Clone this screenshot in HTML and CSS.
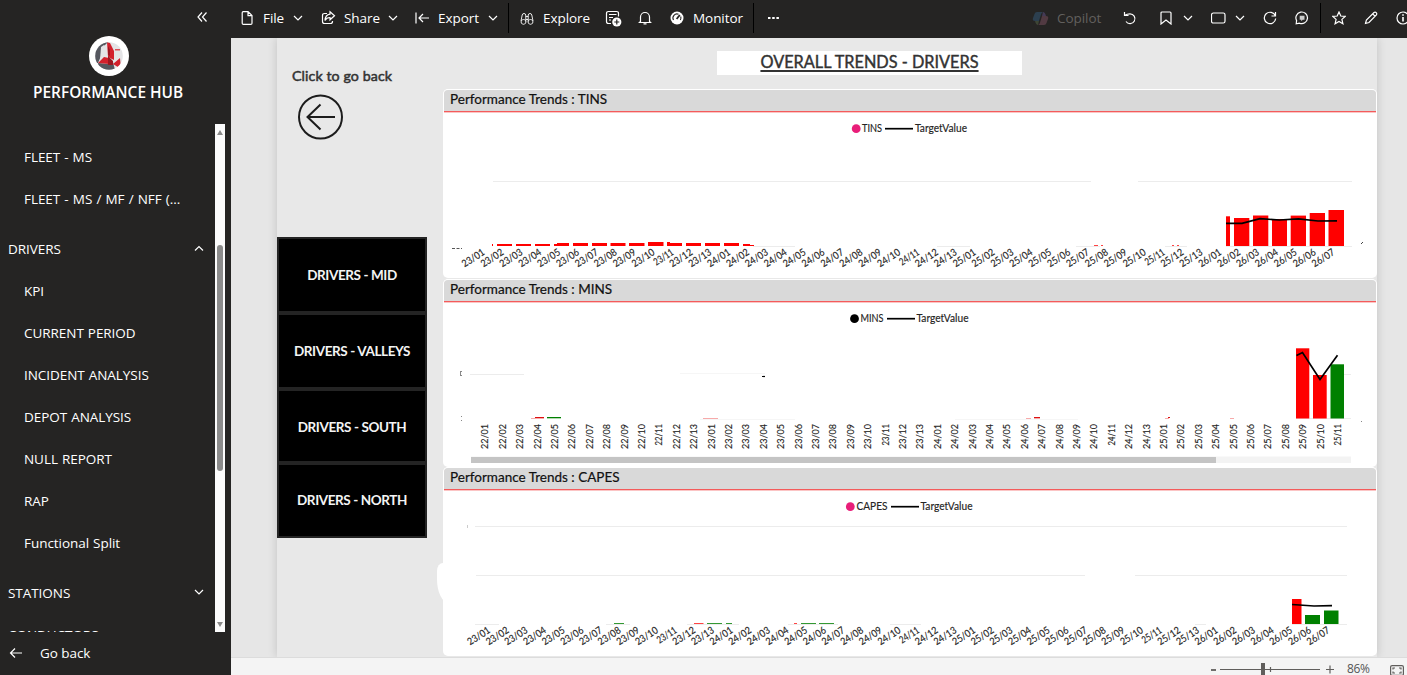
FILE: index.html
```html
<!DOCTYPE html>
<html lang="en">
<head>
<meta charset="utf-8">
<title>Performance Hub</title>
<link rel="stylesheet" href="styles.css">
</head>
<body>
<div class="app">
  <aside class="sidebar">
    <div class="collapse"><svg width="12" height="12" viewBox="0 0 12 12"><path d="M6 1.500 2 6 6 10.500M10.500 1.500 6.500 6l4 4.500"/></svg></div>
    <svg class="logo" width="40" height="40" viewBox="0 0 40 40">
      <circle cx="20" cy="20" r="20" fill="#fff"/>
      <clipPath id="disc"><circle cx="20" cy="20" r="13.800"/></clipPath>
      <g clip-path="url(#disc)">
        <path class="pale" d="M6 6h28v28H6z"/>
        <path class="slate" d="M6 6h13l-5 5-2 9-3 7H6zM9 27l11 1 4-2 2 8H10z"/>
        <path class="pale" d="m12 11 3-2 3 3v9l-7 3z"/>
        <path class="red" d="m9 27 6-6 5 1v6zM18 6l3 1 4 8v9l-6-3zM24 28l7-6 1 11z"/>
        <path class="wine" d="m19 20 5 5v4h-5zM19 10l2 4v6l-2-1z"/>
        <path class="rose" d="M26 13h5v1.500h-5z"/>
      </g>
    </svg>
    <h1 class="hub">PERFORMANCE HUB</h1>
    <div class="nav-wrap">
      <nav class="nav">
        <a class="sub">FLEET - MS</a>
        <a class="sub wide">FLEET - MS / MF / NFF (...</a>
        <a class="group">DRIVERS<svg width="10" height="8" viewBox="0 0 10 8"><path d="m1 5.500 4-4 4 4"/></svg></a>
        <a class="sub">KPI</a>
        <a class="sub">CURRENT PERIOD</a>
        <a class="sub">INCIDENT ANALYSIS</a>
        <a class="sub">DEPOT ANALYSIS</a>
        <a class="sub">NULL REPORT</a>
        <a class="sub">RAP</a>
        <a class="sub">Functional Split</a>
        <a class="group">STATIONS<svg width="10" height="8" viewBox="0 0 10 8"><path d="m1 1 4 4 4-4"/></svg></a>
        <a class="group flush">CONDUCTORS</a>
      </nav>
      <div class="scroll"><i class="up"></i><b></b><i class="down"></i></div>
    </div>
    <a class="back"><svg width="14" height="12" viewBox="0 0 14 12"><path d="M13 6H1.500M6 1.500 1.500 6 6 10.500"/></svg><span>Go back</span></a>
  </aside>

  <main class="main">
    <header class="toolbar">
      <svg width="14" height="16" viewBox="0 0 14 16"><path d="M2.600 1.600H8l4 4v7.600q0 1.200-1.200 1.200H3.400q-1.200 0-1.200-1.200V2.800q0-1.200 1.200-1.200M8 1.600v4h4"/></svg>
      <span>File</span>
      <svg class="chev" width="10" height="8" viewBox="0 0 10 8"><path d="m1 2 4 4 4-4"/></svg>
      <svg width="15" height="16" viewBox="0 0 15 16"><path d="M6 3.500H3.500Q1.500 3.500 1.500 5.500v6q0 2 2 2h6q2 0 2-2V11M9 1.800l4.500 4L9 9.800V7.500Q5.500 7.500 4 10.500 4.300 4.800 9 4.200z"/></svg>
      <span>Share</span>
      <svg class="chev" width="10" height="8" viewBox="0 0 10 8"><path d="m1 2 4 4 4-4"/></svg>
      <svg width="15" height="12" viewBox="0 0 15 12"><path d="M1 .5v11M14 6H4.500M8 2 4 6l4 4"/></svg>
      <span>Export</span>
      <svg class="chev" width="10" height="8" viewBox="0 0 10 8"><path d="m1 2 4 4 4-4"/></svg>
      <i class="div"></i>
      <svg class="thin" width="14" height="14" viewBox="0 0 14 14"><path d="M3.500 8.500a2.400 2.400 0 1 0 .01 0M10.500 8.500a2.400 2.400 0 1 0 .01 0M1 10l1.200-6Q2.500 2.500 4 2.500q1.500 0 1.800 1.500v6.500M13 10l-1.200-6Q11.500 2.500 10 2.500 8.500 2.500 8.200 4v6.500M5.800 5.500h2.400M5.800 8.500h2.400"/></svg>
      <span>Explore</span>
      <svg width="17" height="17" viewBox="0 0 17 17"><path d="M13.500 6.500V3.500q0-2-2-2h-8q-2 0-2 2v8q0 2 2 2H6M4 4.500h7.500M4 7.500h4M4 10h2"/><circle cx="11.800" cy="12" r="4.600" fill="#fff" stroke="none"/><path stroke="#252423" d="M11.800 9.500v5M9.300 12h5"/></svg>
      <svg width="14" height="14" viewBox="0 0 14 14"><path d="M2.500 10.500V6a4.500 4.500 0 0 1 9 0v4.500l1 1h-11zM5.500 12.800h3"/></svg>
      <svg width="14" height="14" viewBox="0 0 14 14"><circle cx="7" cy="7" r="6.500" fill="#fff" stroke="none"/><path stroke="#252423" stroke-width="1.100" d="M3.500 9A4 4 0 0 1 8.500 3.300M10.700 5.500A4 4 0 0 1 10.400 9"/><path stroke="#252423" stroke-width="1.800" d="m6.600 8 3.200-4"/></svg>
      <span>Monitor</span>
      <i class="div"></i>
      <svg width="14" height="4" viewBox="0 0 14 4"><path fill="#fff" stroke="none" d="M2 1h2.500v2H2zM6.200 1h2.500v2H6.200zM10.400 1h2.500v2h-2.500z"/></svg>
      <svg class="dim" width="17" height="15" viewBox="0 0 17 15"><path fill="#2c3f4f" d="M5 1h6q-2 1-2.500 4L7 10H3Q0 10 1 7l1.500-4Q3 1 5 1"/><path fill="#513a42" d="M12 14H6q2-1 2.500-4L10 5h4q3 0 2 3l-1.500 4q-.5 2-2.500 2"/><path fill="#3d4535" d="M3 10h4l-1 4Q4 14 3 10"/><path fill="#443a55" d="M14 5h-4l1-4q2 0 3 4"/></svg>
      <span class="off">Copilot</span>
      <svg width="14" height="14" viewBox="0 0 14 14"><path d="M1.500 1v3.500h4M1.800 4.300Q4 2.800 7 2.800A4.900 4.900 0 1 1 3 10.500"/></svg>
      <svg width="14" height="14" viewBox="0 0 14 14"><path d="M2 2q0-1 1-1h8q1 0 1 1v11L7 9l-5 4z"/></svg>
      <svg class="chev" width="10" height="8" viewBox="0 0 10 8"><path d="m1 2 4 4 4-4"/></svg>
      <svg width="16" height="12" viewBox="0 0 16 12"><rect x=".5" y="1" width="13.500" height="10" rx="1.800"/></svg>
      <svg class="chev" width="10" height="8" viewBox="0 0 10 8"><path d="m1 2 4 4 4-4"/></svg>
      <svg width="14" height="14" viewBox="0 0 14 14"><path d="M12.500 1v4h-4M12.300 4.800A5.700 5.700 0 1 0 12.700 7.500"/></svg>
      <svg width="14" height="14" viewBox="0 0 14 14"><path d="M1.200 12.800 1.600 9.600A5.800 5.800 0 1 1 4.500 12.200z"/><path fill="#ccc" stroke="none" d="M4.700 4.700h4.800v4H7.700l-1.500 1.500V8.700H4.700z"/></svg>
      <i class="div"></i>
      <svg width="14" height="14" viewBox="0 0 14 14"><path d="m7 1 1.800 4 4.400.4-3.300 3 1 4.300L7 10.400l-3.900 2.300 1-4.300-3.300-3 4.400-.4z"/></svg>
      <svg width="14" height="14" viewBox="0 0 14 14"><path d="m1.500 12.500.9-3.500L10 1.500q1.200-.8 2.200.2t.2 2.200L5 11.500zM8.800 3l2.200 2.200"/></svg>
      <svg width="14" height="14" viewBox="0 0 14 14"><circle cx="7" cy="7" r="6"/><path stroke-width="1.600" d="M7 6v4.500M7 3.200v1.500"/></svg>
    </header>

    <section class="stage">
      <div class="page">
        <div class="left">
          <p class="hint">Click to go back</p>
          <svg class="circle" width="46" height="46" viewBox="0 0 46 46"><circle cx="22.500" cy="23" r="21.500"/><path d="M37 23H9.500M22.500 10.500 9.500 23l13 12.500"/></svg>
          <div class="buttons">
            <a>DRIVERS - MID</a>
            <a>DRIVERS - VALLEYS</a>
            <a>DRIVERS - SOUTH</a>
            <a>DRIVERS - NORTH</a>
          </div>
        </div>
        <div class="right">
          <h2 class="title"><span>OVERALL TRENDS - DRIVERS</span></h2>
          <article class="card"><h3>Performance Trends : TINS</h3><svg id="tins" viewBox="443 113 934 165"></svg></article>
          <article class="card"><h3>Performance Trends : MINS</h3><svg id="mins" viewBox="443 303 934 164"></svg></article>
          <article class="card"><h3>Performance Trends : CAPES</h3><svg id="capes" viewBox="443 491 934 165"></svg><i class="bump"></i></article>
        </div>
      </div>
    </section>

    <footer class="status">
      <svg width="124" height="18" viewBox="1210 657 124 18"><path d="M1220 669.500h100M1270.500 667v5M1326 669.500h8M1330 665.500v8"/><path stroke-width="1.800" d="M1211 670h5"/><path stroke-width="4" d="M1263 663v12"/></svg>
      <span>86%</span>
      <svg width="14" height="11" viewBox="0 0 14 11"><rect x=".6" y=".6" width="12.800" height="9.800" rx="1.500"/><path d="M5 3H3v1.500M9 3h2v1.500M5 8H3V6.500M9 8h2V6.500"/></svg>
    </footer>
  </main>
</div>
<script src="charts.js"></script>
</body>
</html>
```
FILE: styles.css
```css
* { box-sizing: border-box; }
body { margin: 0; overflow: hidden; font-family: "Open Sans", "Noto Sans", sans-serif; }
svg { display: block; flex: none; }
.app { display: flex; width: 1407px; height: 675px; overflow: hidden; }

.sidebar { width: 231px; flex: none; display: flex; flex-direction: column; background: #252423; color: #fff; font-size: 13.5px; }
.sidebar path { fill: none; stroke: #fff; stroke-width: 1.2; }
.logo { margin-left: 89px; }
.sidebar .logo path { stroke: none; }
.sidebar .logo .pale { fill: #e4e4e6; }
.sidebar .logo .slate { fill: #55575f; }
.sidebar .logo .red { fill: #d3202c; }
.sidebar .logo .wine { fill: #9d1620; }
.sidebar .logo .rose { fill: #dc5057; }
.collapse { height: 36px; padding: 11px 0 0 196px; }
.hub { margin: 6px 0 0 33px; height: 22px; font-size: 15.4px; line-height: 22px; font-weight: 600; white-space: nowrap; letter-spacing: .02px; }
.nav-wrap { display: flex; margin-top: 20px; height: 508px; }
.nav { width: 215px; padding-top: 12px; overflow: hidden; }
.nav a { display: block; height: 42px; line-height: 42px; white-space: nowrap; letter-spacing: -.05px; word-spacing: .6px; }
.nav .sub { padding-left: 24px; }
.nav .wide { word-spacing: .7px; }
.nav .group { display: flex; justify-content: space-between; align-items: center; margin-top: 8px; padding: 0 11px 0 8px; }
.nav .flush { margin-top: 0; }
.scroll { width: 10px; display: flex; flex-direction: column; align-items: center; background: #fcfcfc; }
.scroll b { width: 6px; height: 226px; margin-top: 110px; border-radius: 3px; background: #8b8b8b; }
.scroll i { border: 3px solid transparent; }
.scroll .up { border-bottom: 5px solid #8b8b8b; border-top: 0; margin-top: 6px; }
.scroll .down { border-top: 5px solid #8b8b8b; border-bottom: 0; margin-top: auto; margin-bottom: 5px; }
.back { display: flex; align-items: center; gap: 17px; height: 42px; padding-left: 9px; letter-spacing: -.05px; }

.main { flex: 1; min-width: 0; display: flex; flex-direction: column; }
.toolbar {
  height: 38px; padding-left: 9px; background: #252423; color: #fff; font-size: 13.5px; overflow: hidden;
  display: grid; align-items: center; white-space: nowrap;
  grid-template-columns: 23px 30px 28px 23px 44px 27px 23px 50px 20px 12px 23px 62px 33px 32px 23px 60px 13px 266px 25px 66px 36px 24px 28px 24px 28px 32px 25px 12px 32px 32px 14px;
}
.toolbar svg { fill: none; stroke: #fff; stroke-width: 1.2; margin-top: -2px; }
.toolbar .thin { stroke-width: .9; }
.toolbar .dim { stroke: none; }
.toolbar span { letter-spacing: -.06px; margin-top: -2px; }
.toolbar .off { color: #62605e; }
.div { width: 1px; height: 30px; background: #000; margin-top: -2px; }

.stage { height: 619px; padding-left: 46px; background: #e6e6e6; overflow: hidden; }
.page { width: 1100px; height: 619px; display: flex; background: #e8e8e8; box-shadow: 0 0 9px rgba(0,0,0,.16); font-family: Lato, "Open Sans", sans-serif; color: #252423; }
.left { width: 166px; }
.hint { margin: 28px 0 0 15px; height: 20px; line-height: 20px; font-size: 14.2px; font-weight: 400; -webkit-text-stroke: .5px #333; letter-spacing: .1px; white-space: nowrap; color: #333; }
.circle { margin: 8px 0 0 21px; fill: none; stroke: #1c1c1c; stroke-width: 2; }
.buttons { width: 150px; margin-top: 97px; height: 301px; display: grid; grid-template-rows: 76px 76px 74px 75px; }
.buttons a { display: flex; align-items: center; justify-content: center; background: #000; border: 2px solid #242424; color: #f4f4f4; font-size: 13.5px; font-weight: 700; letter-spacing: -.4px; white-space: nowrap; }
.buttons a:nth-child(3) { padding-top: 2px; }
.buttons a:nth-child(4) { padding-bottom: 1px; }
.right { width: 934px; }
.title { width: 305px; height: 24px; margin: 13px 0 14px 274px; background: #fff; text-align: center; font-size: 16.3px; line-height: 21px; font-weight: 400; color: #333; -webkit-text-stroke: .4px #333; }
.title span { text-decoration: underline; text-decoration-thickness: 1.5px; text-underline-offset: 2px; white-space: nowrap; }
.card { position: relative; height: 189px; margin-bottom: 1px; background: #fff; border-radius: 5px; border: solid #fff; border-width: 1px 0 0; }
.card:nth-of-type(2) { height: 188px; margin-bottom: 0; }
.card h3 { margin: 0 1px 1px; height: 22px; background: #d9d9d9; border-bottom: 1px solid #f45b5b; border-radius: 4px 4px 0 0; padding-left: 6px; font-size: 13.5px; line-height: 19px; font-weight: 400; color: #111; -webkit-text-stroke: .2px #111; box-shadow: 0 1px #fbc5c5; }
.card svg { width: 934px; }
.bump { position: absolute; left: -6px; top: 95px; width: 12px; height: 40px; background: #fff; border-radius: 6px 0 0 12px / 8px 0 0 24px; }
.tick { font: 10px Lato, sans-serif; fill: #252423; stroke: #252423; stroke-width: .15px; }
.legend { font: 10.5px Lato, sans-serif; fill: #252423; stroke: #252423; stroke-width: .15px; }
.grid { stroke: #ececec; stroke-width: 1; }
.target { fill: none; stroke: #000; stroke-width: 1.7; }

.status { height: 18px; flex: none; display: flex; padding-left: 979px; background: #f4f4f4; border-top: 1px solid #dcdcdc; overflow: hidden; color: #555; }
.status svg { fill: none; stroke: #605e5c; stroke-width: 1.2; margin-top: -1px; }
.status span { width: 43px; margin: 5px 0 0 13px; height: 12px; font-size: 12px; line-height: 12px; letter-spacing: -.3px; }
.status svg:last-child { margin-top: 7px; }
```
FILE: charts.js
```js
const NS = 'http://www.w3.org/2000/svg';
function add(svg, tag, attrs, text) {
  const el = document.createElementNS(NS, tag);
  for (const k in attrs) el.setAttribute(k, attrs[k]);
  if (text) el.textContent = text;
  svg.appendChild(el);
}
// Thirteen reporting periods a year, from the given year up to a last period
function periods(first, lastYear, lastPeriod) {
  const out = [];
  for (let y = first; y <= lastYear; y++)
    for (let p = 1; p <= (y === lastYear ? lastPeriod : 13); p++)
      out.push(y + '/' + String(p).padStart(2, '0'));
  return out;
}
function ticks(svg, names, x0, x1, y, angle) {
  names.forEach((n, i) => {
    const x = x0 + (x1 - x0) * i / (names.length - 1);
    add(svg, 'text', { class: 'tick', 'text-anchor': 'end', textLength: n.endsWith('11') ? 21.5 : 25, lengthAdjust: 'spacingAndGlyphs', transform: `translate(${x} ${y}) rotate(${angle})` }, n);
  });
}
function grid(svg, segs) {
  segs.forEach(([a, b, y]) => add(svg, 'path', { class: 'grid', d: `M${a} ${y}H${b}` }));
}
function bars(svg, list, fill) {
  list.forEach(([a, b, top, bottom]) => add(svg, 'rect', { x: a, y: top, width: b - a, height: bottom - top, fill }));
}
function legend(svg, dotX, y, color, name, nameX, nameW, lineX, textX) {
  add(svg, 'circle', { cx: dotX, cy: y, r: 4.4, fill: color });
  add(svg, 'text', { class: 'legend', x: nameX, y: y + 3.3, textLength: nameW, lengthAdjust: 'spacingAndGlyphs' }, name);
  add(svg, 'path', { class: 'target', d: `M${lineX} ${y}h28` });
  add(svg, 'text', { class: 'legend', x: textX, y: y + 3.3, textLength: 52, lengthAdjust: 'spacingAndGlyphs' }, 'TargetValue');
}
const RED = '#ff0000', GREEN = '#008000';

const tins = document.getElementById('tins');
legend(tins, 856.2, 128.7, '#e91e79', 'TINS', 862, 20, 885, 915);
grid(tins, [[493, 1091, 181.5], [1138, 1352, 181.5], [753, 795, 246.5], [937, 970, 246.5], [1076, 1100, 246.5], [1165, 1187, 246.5], [1226, 1352, 246.5]]);
bars(tins, [[492, 493, 244, 246], [497, 512, 244, 246], [516, 531, 244, 246], [535, 550, 244, 246], [554, 557, 244, 246], [557, 569, 243, 246],
  [573, 588, 243, 246], [592, 607, 243, 246], [610.5, 625.5, 243, 246], [629, 644.5, 243, 246], [648, 663.5, 242, 246], [667, 670, 242, 246], [670, 682, 243, 246],
  [686, 701, 243, 246], [705, 720, 243, 246], [724, 739, 243, 246], [743, 750, 244, 246], [750, 754, 245, 246],
  [1226, 1230, 216.3, 246], [1234, 1249.3, 218, 246], [1253, 1268.3, 215.5, 246], [1272, 1287, 219, 246], [1290.7, 1306, 215.6, 246], [1309.7, 1325, 213, 246], [1328.5, 1344, 210, 246]], RED);
bars(tins, [[1094, 1098, 245, 246], [1101, 1103, 245, 246], [1172, 1174, 245, 246], [1177, 1179, 245, 246]], '#f44');
add(tins, 'path', { class: 'target', d: 'M1226 223.3H1242L1260 218.7 1279.5 220 1298.5 218.8 1318 221 1337 220.8' });
add(tins, 'path', { stroke: '#555', 'stroke-dasharray': '3 1.5', d: 'M452 248.5h10' });
add(tins, 'path', { stroke: '#444', d: 'M1361 244l2-2' });
ticks(tins, periods(23, 26, 7), 485.5, 1335.5, 254, -33);

const mins = document.getElementById('mins');
legend(mins, 854.5, 318.7, '#000', 'MINS', 860.5, 23, 887, 916.5);
grid(mins, [[470, 524, 374.5], [1344, 1351, 374.5], [1296, 1351, 418.5]]);
bars(mins, [[680, 765, 373, 374], [700, 795, 419, 420], [955, 1078, 419, 420]], '#f6f6f6');
bars(mins, [[531, 544, 418, 419], [703, 718, 418, 419], [1026, 1031, 418, 419], [1034, 1040, 418, 419], [1165, 1169, 418, 419], [1230, 1234, 418, 419]], '#f7aaaa');
bars(mins, [[535, 544, 417, 418], [1034, 1040, 417, 418], [1168, 1170, 417, 418]], '#d11');
bars(mins, [[547, 561, 417, 418.3]], GREEN);
bars(mins, [[1296, 1309.3, 348.3, 418.5], [1313, 1326.7, 375, 418.5]], RED);
bars(mins, [[1330.5, 1344, 364.3, 418.5]], GREEN);
add(mins, 'path', { class: 'target', d: 'M1296.5 355.5 1302.5 352.5 1320 379.5 1337.5 355.3' });
add(mins, 'path', { stroke: '#000', 'stroke-width': 1.2, d: 'M762 376.5h3' });
add(mins, 'path', { fill: 'none', stroke: '#888', d: 'M460.5 371v5M462 371.5h-1M462 375.5h-1M461.5 416v1M461.5 420v1M1361.5 421v1' });
ticks(mins, periods(22, 25, 11), 488.3, 1341, 424, -90);
add(mins, 'rect', { x: 471, y: 456.5, width: 880, height: 6.5, fill: '#f3f3f3' });
add(mins, 'rect', { x: 471, y: 457, width: 745, height: 6, fill: '#c4c4c4' });

const capes = document.getElementById('capes');
legend(capes, 850.3, 506.7, '#e91e79', 'CAPES', 856.5, 31, 891, 920.5);
grid(capes, [[475, 1347, 526.5], [476, 1085, 575.5], [1135, 1347, 575.5], [475, 499, 624.5], [606, 630, 624.5], [687, 739, 624.5], [788, 838, 624.5], [890, 921, 624.5], [1195, 1206, 624.5], [1292, 1347, 624.5]]);
bars(capes, [[614, 624, 623, 624], [707, 722, 623, 624], [726, 732, 623, 624], [801, 816, 623, 624], [819, 834, 623, 624]], '#393');
bars(capes, [[1305, 1320, 615, 624], [1324, 1338.5, 610.5, 624]], GREEN);
bars(capes, [[694, 703.5, 623, 624], [794, 797, 623, 624]], '#f44');
bars(capes, [[1292, 1301.5, 599, 624]], RED);
add(capes, 'path', { class: 'target', d: 'M1292 604.5 1314 606 1332 605.7' });
add(capes, 'path', { stroke: '#ccc', d: 'M467.5 525v3' });
ticks(capes, periods(23, 26, 7), 491, 1330.5, 632, -33);
```
